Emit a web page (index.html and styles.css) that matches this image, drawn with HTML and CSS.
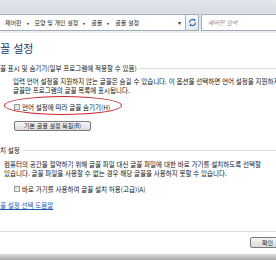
FILE: index.html
```html
<!DOCTYPE html>
<html lang="ko">
<head>
    <meta charset="UTF-8">
    <title>글꼴 설정</title>
    <link rel="stylesheet" href="styles.css">
</head>
<body>
    <div class="topband"></div>

    <div class="addressbar">
        <div class="crumbs">
            <span>제어판</span><span class="sep">▸</span>
            <span>모양 및 개인 설정</span><span class="sep">▸</span>
            <span>글꼴</span><span class="sep">▸</span>
            <span>글꼴 설정</span>
            <span class="drop">▾</span>
        </div>
        <div class="refresh">
            <svg width="9" height="9" viewBox="0 0 9 9">
                <path d="M1.5 4.5 A3 3 0 0 1 6.5 2.2" fill="none" stroke="#2f6fb8" stroke-width="1.2"/>
                <path d="M5.2 0.8 L7.6 1.6 L6.6 3.8 Z" fill="#2f6fb8"/>
                <path d="M7.5 4.5 A3 3 0 0 1 2.5 6.8" fill="none" stroke="#2f6fb8" stroke-width="1.2"/>
                <path d="M3.8 8.2 L1.4 7.4 L2.4 5.2 Z" fill="#2f6fb8"/>
            </svg>
        </div>
        <div class="search">제어판 검색</div>
    </div>

    <div class="content">
        <h1 class="title">꼴 설정</h1>

        <div class="group-head"><span>꼴 표시 및 숨기기(일부 프로그램에 적용할 수 있음)</span></div>
        <p class="desc desc-in">입력 언어 설정을 지원하지 않는 글꼴은 숨길 수 있습니다. 이 옵션을 선택하면 언어 설정을 지원하지<br>글꼴만 프로그램의 글꼴 목록에 표시됩니다.</p>
        <div class="check check-first">
            <span class="box"></span>
            <span>언어 설정에 따라 글꼴 숨기기(H)</span>
            <span class="circle"></span>
        </div>
        <button class="btn restore">기본 글꼴 설정 복원(R)</button>

        <div class="group-head group-two"><span>치 설정</span></div>
        <p class="desc desc-two">컴퓨터의 공간을 절약하기 위해 글꼴 파일 대신 글꼴 파일에 대한 바로 가기를 설치하도록 선택할<br>있습니다. 글꼴 파일을 사용할 수 없는 경우 해당 글꼴을 사용하지 못할 수 있습니다.</p>
        <div class="check check-second">
            <span class="box"></span>
            <span>바로 가기를 사용하여 글꼴 설치 허용(고급)(A)</span>
        </div>

        <a class="help" href="#">꼴 설정 선택 도움말</a>
    </div>

    <div class="footer">
        <button class="btn ok">확인</button>
    </div>
    <div class="bottomband"></div>
</body>
</html>
```

FILE: styles.css
```css
*{
    margin: 0;
    padding: 0;
    box-sizing: border-box;
}

html, body{
    overflow: hidden;
}

body{
    width: 276px;
    height: 260px;
    display: flex;
    flex-direction: column;
    background: #fff;
    color: #111;
    font-family: "Noto Sans CJK KR", "Noto Sans", sans-serif;
    font-size: 6.5px;
    line-height: 8px;
    white-space: nowrap;
}

.topband{
    height: 13px;
    background: linear-gradient(#e4e7eb, #d8dde3);
}

.addressbar{
    height: 20px;
    display: flex;
    align-items: flex-start;
    padding-top: 1px;
    background: linear-gradient(#dde2e8, #eef1f4);
}

.crumbs{
    width: 188px;
    height: 17px;
    margin-left: -2px;
    display: flex;
    align-items: center;
    padding-left: 6px;
    background: #fff;
    border: 1px solid #a3adb8;
    color: #1e1e1e;
    font-size: 6px;
}

.sep{
    margin: 0 5px;
    font-size: 5px;
    color: #555;
}

.drop{
    margin-left: auto;
    margin-right: 4px;
    color: #333;
}

.refresh{
    width: 13px;
    height: 17px;
    display: flex;
    align-items: center;
    justify-content: center;
    border: 1px solid #a3adb8;
    border-left: 0;
    background: linear-gradient(#fafbfc, #e4e8ec);
}

.search{
    flex: 1;
    height: 17px;
    margin-left: 2px;
    margin-right: -4px;
    padding-left: 6px;
    display: flex;
    align-items: center;
    background: #fff;
    border: 1px solid #a3adb8;
    color: #8d8d8d;
    font-size: 6px;
    font-style: italic;
}

.content{
    flex: 1;
    display: flex;
    flex-direction: column;
    align-items: flex-start;
}

.title{
    margin-top: 9px;
    font-size: 11px;
    line-height: 12px;
    font-weight: normal;
    color: #1e3a6e;
}

.group-head{
    width: 100%;
    margin-top: 10px;
    display: flex;
    align-items: center;
}

.group-head::after{
    content: "";
    flex: 1;
    height: 1px;
    margin-left: 3px;
    background: #d8dee4;
}

.group-two{
    margin-top: 15px;
}

.desc{
    margin-top: 5px;
    line-height: 9px;
}

.desc-in{
    margin-left: 13px;
}

.desc-two{
    margin-top: 6px;
    margin-left: 4px;
}

.check{
    position: relative;
    display: flex;
    align-items: center;
    gap: 2px;
    padding-left: 14px;
}

.check-first{
    margin-top: 8px;
}

.check-second{
    margin-top: 7px;
}

.box{
    width: 6px;
    height: 6px;
    border: 1px solid #9a9a9a;
    background: linear-gradient(135deg, #dcdcdc, #f8f8f8);
}

.circle{
    position: absolute;
    left: 4px;
    top: -7px;
    width: 118px;
    height: 19px;
    border: 1.5px solid #c9252d;
    border-radius: 50%;
}

.btn{
    height: 10px;
    border: 1px solid #7a7a7a;
    border-radius: 2px;
    background: linear-gradient(#f6f6f6, #dadada);
    font-family: inherit;
    font-size: 6px;
    line-height: 8px;
    color: #222;
}

.restore{
    width: 77px;
    margin-top: 10px;
    margin-left: 14px;
}

.help{
    margin-top: 8px;
    color: #1a5fb4;
    text-decoration: underline;
}

.footer{
    height: 23px;
    display: flex;
    justify-content: flex-end;
    align-items: flex-start;
    padding-top: 5px;
    border-top: 1px solid #dcdcdc;
}

.ok{
    width: 34px;
    height: 11px;
    margin-right: -8px;
    text-align: left;
    padding-left: 11px;
}

.bottomband{
    height: 6px;
    background: linear-gradient(#dcdcdc, #a8a8a8);
}
```
